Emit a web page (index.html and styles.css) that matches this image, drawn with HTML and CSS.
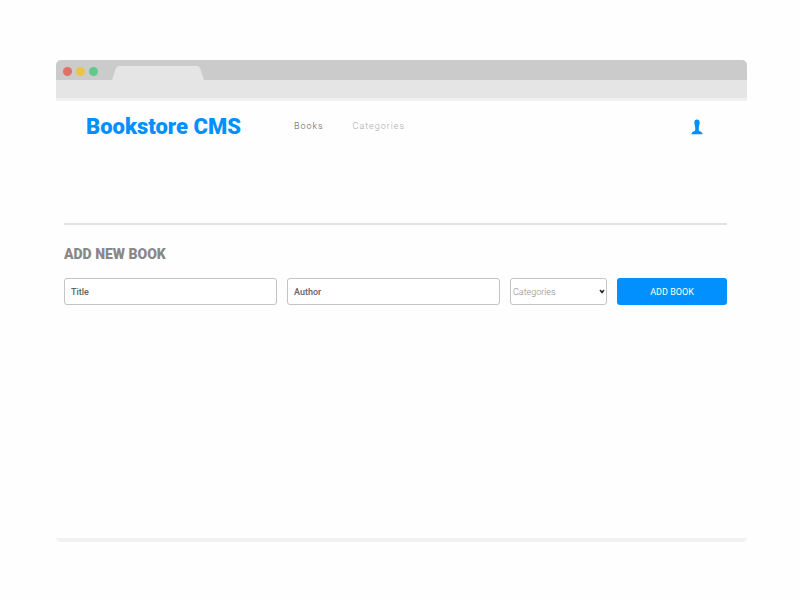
FILE: index.html
```html
<!DOCTYPE html>
<html lang="en">
<head>
<meta charset="utf-8">
<title>Bookstore CMS</title>
<link rel="stylesheet" href="styles.css">
</head>
<body>
<div class="window">
  <div class="tabs">
    <span class="dot red"></span><span class="dot yellow"></span><span class="dot green"></span>
    <svg class="tab" width="92" height="14" viewBox="0 0 92 14" aria-hidden="true"><path d="M0 14 L4 2 Q5 0 7 0 H85 Q87 0 88 2 L92 14Z" fill="#e5e5e5"/></svg>
  </div>
  <div class="toolbar"></div>
  <header class="header">
    <h1 class="brand">Bookstore CMS</h1>
    <nav class="nav">
      <a class="active" href="#books">Books</a>
      <a href="#categories">Categories</a>
    </nav>
    <button class="user" type="button" aria-label="User">
      <svg width="12" height="16" viewBox="0 0 12 16"><path d="M6 .4C4.2 .4 3.3 1.6 3.3 3.6C3.3 5.6 4.2 7.4 4.2 9V11C4.2 12.8 .6 12 .4 15.2H11.6C11.4 12 7.8 12.8 7.8 11V9C7.8 7.4 8.7 5.6 8.7 3.6C8.7 1.6 7.8 .4 6 .4Z" fill="#0290ff"/></svg>
    </button>
  </header>
  <main class="content">
    <h2 class="heading">ADD NEW BOOK</h2>
    <form class="form">
      <input type="text" placeholder="Title" aria-label="Title">
      <input type="text" placeholder="Author" aria-label="Author">
      <div class="select">
        <select aria-label="Categories"><option>Categories</option></select>
        <svg class="chevron" width="6" height="5" viewBox="0 0 6 5" aria-hidden="true"><path d="M1 1L3 3.5L5 1" fill="none" stroke="#222" stroke-width="1.5"/></svg>
      </div>
      <button class="submit" type="submit">ADD BOOK</button>
    </form>
  </main>
</div>
</body>
</html>
```
FILE: styles.css
```css
* { box-sizing: border-box; }

body {
  display: flex;
  min-height: 100vh;
  margin: 0;
  padding: 60px 53px 58px 56px;
  background: #fefefe;
  font-family: Roboto, "Liberation Sans", sans-serif;
}

.window {
  display: flex;
  flex: 1;
  flex-direction: column;
  overflow: hidden;
  border-bottom: 4px solid #f1f1f1;
  border-radius: 5px;
}

.tabs {
  display: flex;
  align-items: center;
  gap: 4px;
  height: 20px;
  padding: 2px 7px 0;
  background: #cbcbcb;
}

.dot {
  width: 9px;
  height: 9px;
  border-radius: 50%;
}

.red { background: #e17065; }
.yellow { background: #e7c546; }
.green { background: #5ccb8b; }

.tab {
  align-self: flex-end;
  margin-left: 10px;
}

.toolbar {
  height: 21px;
  border-bottom: 3px solid #f1f1f1;
  background: #e5e5e5;
}

.header {
  display: flex;
  align-items: center;
  height: 50px;
  padding: 0 44px 0 30px;
}

.brand {
  margin: 0;
  color: #0290ff;
  font-size: 22px;
  font-weight: 900;
}

.nav {
  display: flex;
  gap: 29px;
  margin-left: 53px;
}

.nav a {
  color: #a8a8a8;
  font-size: 9px;
  font-weight: 300;
  letter-spacing: 1px;
  text-decoration: none;
}

.nav .active { color: #606060; }

.user {
  display: flex;
  margin-left: auto;
  padding: 2px 0 0;
  border: 0;
  background: none;
}

.content {
  margin: 72px 20px 0 8px;
  border-top: 2px solid #e3e3e3;
}

.heading {
  margin: 20px 0 14px;
  color: #888;
  font-size: 14px;
  font-weight: 900;
  line-height: 19px;
}

.form {
  display: grid;
  grid-template-columns: 213fr 213fr 97fr 110fr;
  gap: 10px;
}

.form input,
.form select,
.submit {
  width: 100%;
  min-width: 0;
  height: 27px;
  border-radius: 3px;
  font-family: inherit;
  font-size: 9px;
}

.form input,
.form select {
  border: 1px solid #c4c4c4;
  background: #fff;
}

.form input { padding: 0 6px; }

.form input::placeholder {
  color: #626262;
  font-weight: 500;
  opacity: 1;
}

.select { position: relative; }

.form select {
  padding: 0 2px;
  appearance: none;
  color: #8c8c8c;
  font-weight: 300;
}

.chevron {
  position: absolute;
  top: 11px;
  right: 2px;
  pointer-events: none;
}

.submit {
  border: 0;
  background: #0290ff;
  color: #fff;
  font-weight: 400;
}
```
